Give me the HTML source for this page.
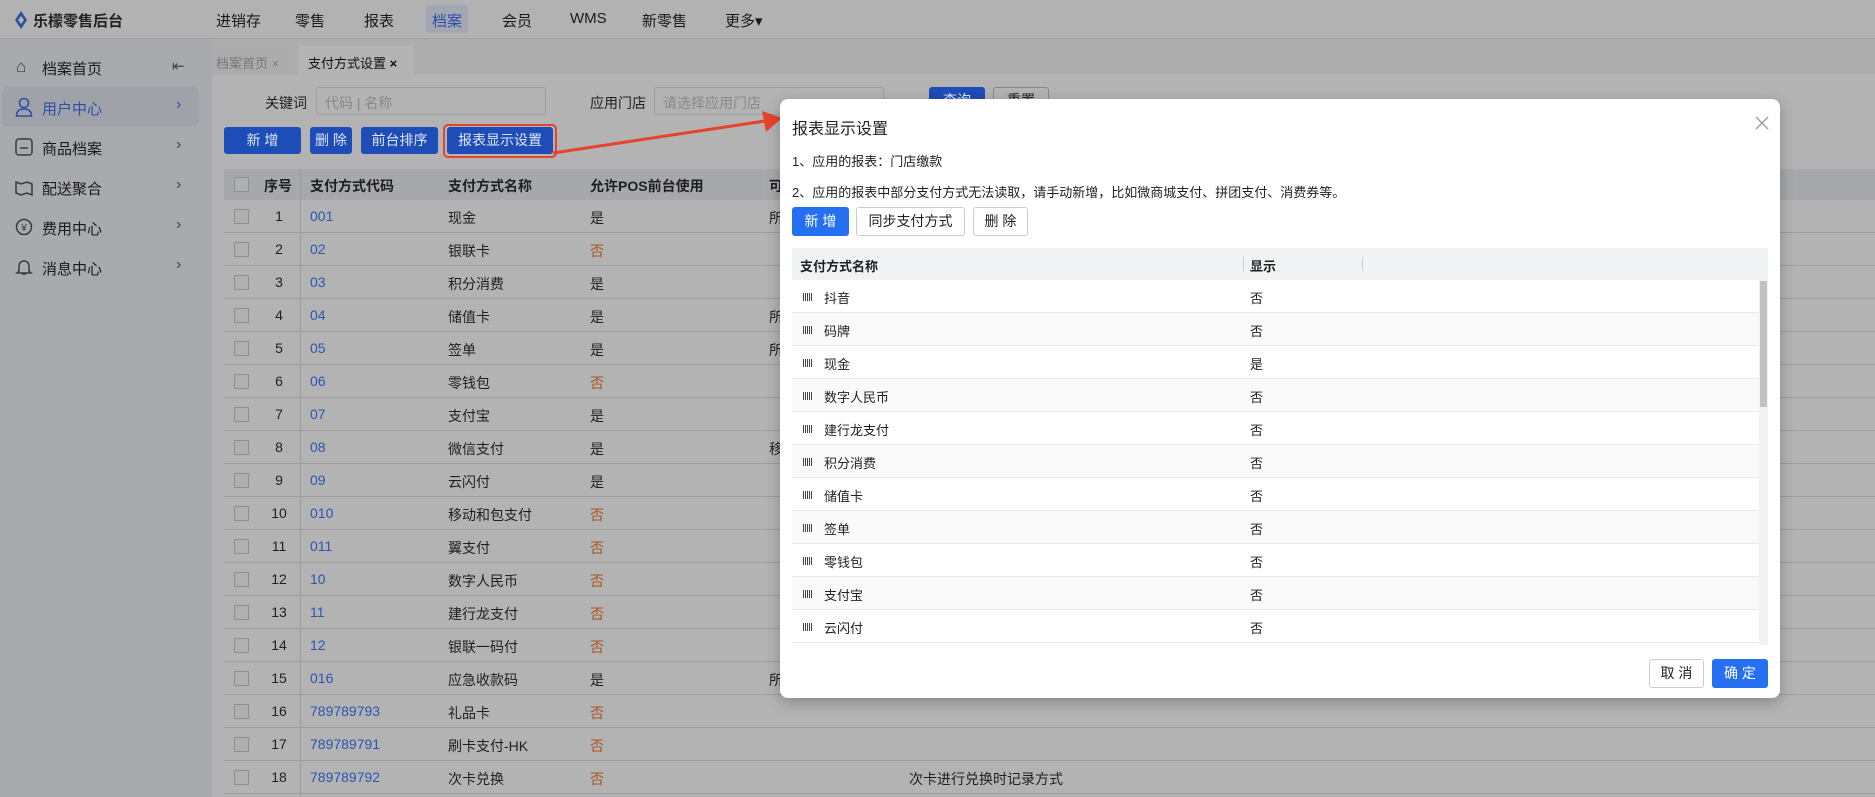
<!DOCTYPE html>
<html><head><meta charset="utf-8"><style>
*{box-sizing:border-box;margin:0;padding:0}
body{width:1875px;height:797px;overflow:hidden;position:relative;background:#acacac;font-family:"Liberation Sans","Noto Sans CJK SC",sans-serif;font-size:14px;color:#1f1f1f}
.a{position:absolute;white-space:nowrap}
.top{left:0;top:0;width:1875px;height:39px;background:#b2b2b2;border-bottom:1px solid #a2a2a2}
.nav{top:10px;font-size:15px;color:#1a1a1a}
.side{left:0;top:39px;width:212px;height:758px;background:#a9aaad}
.si{left:42px;font-size:15px;color:#1a1a1a}
.btn{height:27px;line-height:27px;text-align:center;color:#dfe6f5;background:#1e4db7;border-radius:3px;font-size:14px}
.row{left:224px;width:1651px;height:33px;border-bottom:1px solid #9d9d9d}
.cb{width:15px;height:15px;border:1px solid #8e8e8e;background:#b0b0b0}
.lnk{color:#2a55b3}.no{color:#a8561e}
.m{left:780px;top:99px;width:1000px;height:599px;background:#fff;border-radius:8px;box-shadow:0 4px 14px rgba(0,0,0,.25)}
.mr{left:12px;width:976px;height:33px;border-bottom:1px solid #e6e8eb}
.dot{width:9px;height:8px;background:repeating-linear-gradient(90deg,#444 0 1px,transparent 1px 2px);top:13px;left:11px}
</style></head><body>
<div class="a top"></div>
<svg class="a" style="left:14px;top:11px" width="14" height="18" viewBox="0 0 14 18"><path d="M7 0L13 9L7 18L1 9Z" fill="#2c4fa0"/><path d="M7 5L10 9L7 13L4 9Z" fill="#b2b2b2"/></svg>
<div class="a" style="left:33px;top:10px;font-size:15px;font-weight:bold;color:#222">乐檬零售后台</div>
<div class="a nav" style="left:216px">进销存</div>
<div class="a nav" style="left:295px">零售</div>
<div class="a nav" style="left:364px">报表</div>
<div class="a" style="left:426px;top:5px;width:42px;height:28px;background:#a3a6b3;border-radius:3px"></div>
<div class="a nav" style="left:432px;color:#2a4fa8">档案</div>
<div class="a nav" style="left:502px">会员</div>
<div class="a nav" style="left:570px">WMS</div>
<div class="a nav" style="left:642px">新零售</div>
<div class="a nav" style="left:725px">更多▾</div>

<div class="a side"></div>
<div class="a" style="left:2px;top:87px;width:197px;height:40px;background:#a0a2a9;border-radius:6px"></div>
<div class="a si" style="top:58px">档案首页</div>
<div class="a si" style="top:98px;color:#2a4fa8">用户中心</div>
<div class="a si" style="top:138px">商品档案</div>
<div class="a si" style="top:178px">配送聚合</div>
<div class="a si" style="top:218px">费用中心</div>
<div class="a si" style="top:258px">消息中心</div>
<div class="a" style="left:16px;top:57px;font-size:17px;color:#3a3a3a">⌂</div>
<svg class="a" style="left:15px;top:97px" width="18" height="20"><circle cx="9" cy="6" r="4.5" fill="none" stroke="#2a4fa8" stroke-width="1.6"/><path d="M1.5 19c0-5 3-7 7.5-7s7.5 2 7.5 7z" fill="none" stroke="#2a4fa8" stroke-width="1.6"/></svg>
<svg class="a" style="left:15px;top:138px" width="18" height="18"><rect x="1" y="1" width="16" height="16" rx="3" fill="none" stroke="#3a3a3a" stroke-width="1.5"/><path d="M5 10h8" stroke="#3a3a3a" stroke-width="1.5"/></svg>
<svg class="a" style="left:15px;top:178px" width="18" height="18"><path d="M1 4l5 2 6-2 5 2v11l-5-2-6 2-5-2z" fill="none" stroke="#3a3a3a" stroke-width="1.5"/></svg>
<svg class="a" style="left:15px;top:218px" width="18" height="18"><circle cx="9" cy="9" r="7.5" fill="none" stroke="#3a3a3a" stroke-width="1.5"/><text x="9" y="13" font-size="10" text-anchor="middle" fill="#3a3a3a">¥</text></svg>
<svg class="a" style="left:15px;top:258px" width="18" height="18"><path d="M4 13V8a5 5 0 0 1 10 0v5l2 2H2z M7 16h4" fill="none" stroke="#3a3a3a" stroke-width="1.5"/></svg>
<div class="a" style="left:172px;top:57px;font-size:15px;color:#444">⇤</div>
<div class="a" style="left:176px;top:96px;font-size:16px;color:#2a4fa8">›</div>
<div class="a" style="left:176px;top:136px;font-size:16px;color:#444">›</div>
<div class="a" style="left:176px;top:176px;font-size:16px;color:#444">›</div>
<div class="a" style="left:176px;top:216px;font-size:16px;color:#444">›</div>
<div class="a" style="left:176px;top:256px;font-size:16px;color:#444">›</div>

<div class="a" style="left:212px;top:39px;width:1663px;height:758px;background:#adadad"></div>
<div class="a" style="left:212px;top:74px;width:1663px;height:723px;background:#b3b3b3"></div>
<div class="a" style="left:212px;top:49px;width:81px;height:25px;background:#acacac;color:#777;padding:4px 4px;font-size:13px">档案首页 ×</div>
<div class="a" style="left:298px;top:46px;width:116px;height:28px;background:#b3b3b3;padding:7px 10px;font-size:13px;color:#111">支付方式设置 <b>×</b></div>

<div class="a" style="left:265px;top:93px">关键词</div>
<div class="a" style="left:316px;top:87px;width:230px;height:28px;border:1px solid #9d9d9d;border-radius:3px;color:#888;padding:5px 8px">代码 | 名称</div>
<div class="a" style="left:590px;top:93px">应用门店</div>
<div class="a" style="left:654px;top:87px;width:230px;height:28px;border:1px solid #9d9d9d;border-radius:3px;color:#888;padding:5px 8px">请选择应用门店</div>
<div class="a btn" style="left:929px;top:87px;width:56px">查询</div>
<div class="a" style="left:993px;top:87px;width:56px;height:27px;border:1px solid #888;border-radius:3px;text-align:center;line-height:25px">重置</div>

<div class="a btn" style="left:224px;top:127px;width:77px">新 增</div>
<div class="a btn" style="left:310px;top:127px;width:42px">删 除</div>
<div class="a btn" style="left:361px;top:127px;width:77px">前台排序</div>
<div class="a btn" style="left:447px;top:127px;width:106px">报表显示设置</div>
<div class="a" style="left:443px;top:124px;width:114px;height:34px;border:2px solid #e6432b;border-radius:5px"></div>
<svg class="a" style="left:550px;top:105px" width="240" height="55"><path d="M3 48L215 16" stroke="#e6432b" stroke-width="3"/><path d="M212 6L232 13L216 27Z" fill="#e6432b"/></svg>

<div class="a" style="left:224px;top:169px;width:1651px;height:31px;background:#a7a8ac"></div>
<div class="a cb" style="left:234px;top:177px"></div>
<div class="a" style="left:264px;top:176px;font-weight:bold">序号</div>
<div class="a" style="left:310px;top:176px;font-weight:bold">支付方式代码</div>
<div class="a" style="left:448px;top:176px;font-weight:bold">支付方式名称</div>
<div class="a" style="left:590px;top:176px;font-weight:bold">允许POS前台使用</div>
<div class="a" style="left:769px;top:176px;font-weight:bold">可</div>
<div class="a" style="left:300px;top:169px;width:1px;height:628px;background:#9a9a9a"></div>
<div id="rows"></div>

<div class="a m">
<div class="a" style="left:12px;top:16px;font-size:16px;color:#222">报表显示设置</div>
<svg class="a" style="left:975px;top:17px" width="14" height="14"><path d="M1 1L13 13M13 1L1 13" stroke="#999" stroke-width="1.3"/></svg>
<div class="a" style="left:12px;top:52px;font-size:13px">1、应用的报表：门店缴款</div>
<div class="a" style="left:12px;top:83px;font-size:13px">2、应用的报表中部分支付方式无法读取，请手动新增，比如微商城支付、拼团支付、消费券等。</div>
<div class="a" style="left:12px;top:108px;width:57px;height:29px;background:#2470f0;color:#fff;border-radius:3px;text-align:center;line-height:29px">新 增</div>
<div class="a" style="left:76px;top:108px;width:109px;height:29px;border:1px solid #ccc;border-radius:3px;text-align:center;line-height:27px">同步支付方式</div>
<div class="a" style="left:193px;top:108px;width:55px;height:29px;border:1px solid #ccc;border-radius:3px;text-align:center;line-height:27px">删 除</div>
<div class="a" style="left:12px;top:149px;width:976px;height:32px;background:#f1f2f4"></div>
<div class="a" style="left:20px;top:157px;font-weight:bold;font-size:13px">支付方式名称</div>
<div class="a" style="left:470px;top:157px;font-weight:bold;font-size:13px">显示</div>
<div class="a" style="left:463px;top:158px;width:1px;height:14px;background:#ccc"></div>
<div class="a" style="left:582px;top:158px;width:1px;height:14px;background:#ccc"></div>
<div id="mrows"></div>
<div class="a" style="left:979px;top:181px;width:9px;height:365px;background:#f2f2f2"></div>
<div class="a" style="left:980px;top:182px;width:7px;height:126px;background:#c1c1c1"></div>
<div class="a" style="left:869px;top:560px;width:55px;height:29px;border:1px solid #ccc;border-radius:3px;text-align:center;line-height:27px">取 消</div>
<div class="a" style="left:932px;top:560px;width:56px;height:29px;background:#2470f0;color:#fff;border-radius:3px;text-align:center;line-height:29px">确 定</div>
</div>
<script>
var c=["001","02","03","04","05","06","07","08","09","010","011","10","11","12","016","789789793","789789791","789789792"];
var n=["现金","银联卡","积分消费","储值卡","签单","零钱包","支付宝","微信支付","云闪付","移动和包支付","翼支付","数字人民币","建行龙支付","银联一码付","应急收款码","礼品卡","刷卡支付-HK","次卡兑换"];
var p="是否是是是否是是是否否否否否是否否否";
var x={0:"所",3:"所",4:"所",7:"移",14:"所"};
var h="";
for(var i=0;i<18;i++){var t=200+i*33;
h+='<div class="a row" style="top:'+t+'px"></div><div class="a cb" style="left:234px;top:'+(t+9)+'px"></div>'+
'<div class="a" style="left:264px;width:30px;text-align:center;top:'+(t+8)+'px">'+(i+1)+'</div>'+
'<div class="a lnk" style="left:310px;top:'+(t+8)+'px">'+c[i]+'</div>'+
'<div class="a" style="left:448px;top:'+(t+8)+'px">'+n[i]+'</div>'+
'<div class="a '+(p[i]=="否"?"no":"")+'" style="left:590px;top:'+(t+8)+'px">'+p[i]+'</div>'+
(x[i]?'<div class="a" style="left:769px;top:'+(t+8)+'px">'+x[i]+'</div>':'');}
h+='<div class="a" style="left:909px;top:'+(200+17*33+8)+'px">次卡进行兑换时记录方式</div>';
document.getElementById("rows").innerHTML=h;
var mn=["抖音","码牌","现金","数字人民币","建行龙支付","积分消费","储值卡","签单","零钱包","支付宝","云闪付"];
var mv="否否是否否否否否否否否";var g="";
for(var j=0;j<11;j++){var u=181+j*33;
g+='<div class="a mr" style="top:'+u+'px;background:'+(j%2?"#fafafa":"#fff")+'"><div class="a dot"></div><div class="a" style="left:32px;top:8px;font-size:13px">'+mn[j]+'</div><div class="a" style="left:458px;top:8px;font-size:13px">'+mv[j]+'</div></div>';}
document.getElementById("mrows").innerHTML=g;
</script>
</body></html>
